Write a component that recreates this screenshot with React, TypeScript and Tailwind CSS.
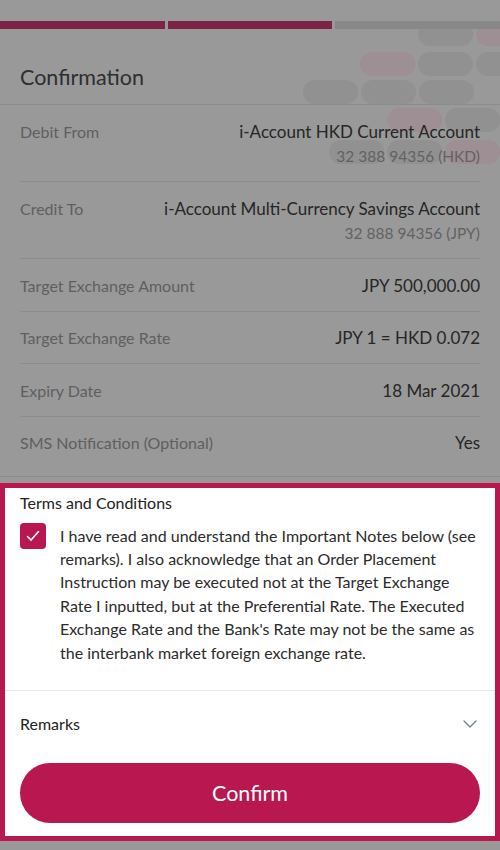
import React from "react";

type Row = { label: string; value: string; sub?: string };

const rows: Row[] = [
  { label: "Debit From", value: "i-Account HKD Current Account", sub: "32 388 94356 (HKD)" },
  { label: "Credit To", value: "i-Account Multi-Currency Savings Account", sub: "32 888 94356 (JPY)" },
  { label: "Target Exchange Amount", value: "JPY 500,000.00" },
  { label: "Target Exchange Rate", value: "JPY 1 = HKD 0.072" },
  { label: "Expiry Date", value: "18 Mar 2021" },
  { label: "SMS Notification (Optional)", value: "Yes" },
];

// decorative pills behind the header (x, y, pink?)
const pills: [number, number, boolean][] = [
  [418, 22, false],
  [476, 22, true],
  [360, 52, true],
  [418, 52, false],
  [476, 52, false],
  [303, 80, false],
  [361, 80, false],
  [419, 80, false],
  [387, 108, true],
  [445, 108, false],
  [329, 140, false],
  [387, 140, false],
  [445, 140, true],
];

function Pills() {
  return (
    <div className="pointer-events-none absolute inset-0 z-0">
      {pills.map(([x, y, pink], i) => (
        <div
          key={i}
          className={`absolute h-[24px] w-[55px] rounded-full ${pink ? "bg-[#9d8f93]" : "bg-[#919191]"}`}
          style={{ left: x, top: y }}
        />
      ))}
    </div>
  );
}

function DetailRow({ row, last }: { row: Row; last: boolean }) {
  const height = row.sub ? "h-[77px]" : last ? "h-[60px]" : "h-[52.5px]";
  return (
    <div className={`flex items-start justify-between gap-4 border-b border-[#8c8c8c] pt-[13.5px] ${height}`}>
      <span className="shrink-0 text-[16px] leading-[25px] text-[#5f5f5f]">{row.label}</span>
      <div className="text-right">
        <div className="text-[17px] leading-[25px] text-[#262626]">{row.value}</div>
        {row.sub && <div className="text-[15.5px] leading-[25px] text-[#626262]">{row.sub}</div>}
      </div>
    </div>
  );
}

export default function App() {
  return (
    <div className="relative h-[850px] w-full overflow-hidden bg-[#999999] font-['Lato','Noto_Sans',sans-serif]">
      <Pills />

      <div className="relative z-10">
        <div className="h-[21px]" />
        <div className="flex h-[8px] gap-[3px]">
          <div className="flex-1 bg-[#7c2445]" />
          <div className="flex-1 bg-[#7c2445]" />
          <div className="flex-1 bg-[#888888]" />
        </div>

        <div className="flex h-[76px] items-end border-b border-[#8c8c8c] px-5 pb-[15px]">
          <h1 className="text-[21.5px] leading-[24px] text-[#2e2e2e]">Confirmation</h1>
        </div>

        <div>
          {rows.map((row, i) => (
            <div key={row.label} className={i === rows.length - 1 ? "" : "px-5"}>
              {i === rows.length - 1 ? (
                <div className="border-b border-[#8c8c8c] px-5">
                  <div className="flex h-[59px] items-start justify-between pt-[13.5px]">
                    <span className="text-[16px] leading-[25px] text-[#5f5f5f]">{row.label}</span>
                    <span className="text-[17px] leading-[25px] text-[#262626]">{row.value}</span>
                  </div>
                </div>
              ) : (
                <DetailRow row={row} last={false} />
              )}
            </div>
          ))}
        </div>

        <div className="h-[6px]" />

        <section className="border-[5px] border-[#b9174f] bg-white">
          <div className="px-[15px] pt-[4px]">
            <h2 className="text-[16px] leading-[22px] text-[#222222]">Terms and Conditions</h2>
            <div className="mt-[9px] flex gap-[14px] pb-[26px]">
              <div className="flex h-[26px] w-[26px] shrink-0 items-center justify-center rounded-[4px] bg-[#b9174f]">
                <svg width="14" height="12" viewBox="0 0 14 12" fill="none">
                  <path d="M1.5 6.5l3.6 3.6L12.5 1.5" stroke="white" strokeWidth="1.6" strokeLinecap="round" strokeLinejoin="round" />
                </svg>
              </div>
              <p className="mt-[1px] text-[16px] leading-[23.4px] text-[#2b2b2b]">
                I have read and understand the Important Notes below (see remarks). I also acknowledge that an Order
                Placement Instruction may be executed not at the Target Exchange Rate I inputted, but at the
                Preferential Rate. The Executed Exchange Rate and the Bank's Rate may not be the same as the interbank
                market foreign exchange rate.
              </p>
            </div>
          </div>

          <div className="border-t border-[#e6e6e6]">
            <div className="flex h-[66px] items-center justify-between px-[15px]">
              <span className="text-[16px] text-[#222222]">Remarks</span>
              <svg width="14" height="8" viewBox="0 0 14 8" fill="none" className="mr-[3px]">
                <path d="M1 1l6 6 6-6" stroke="#6c7fa8" strokeWidth="1.3" strokeLinecap="round" strokeLinejoin="round" />
              </svg>
            </div>
            <div className="px-[15px] pb-[13px] pt-[6px]">
              <button
                type="button"
                className="flex h-[60px] w-full items-center justify-center rounded-full bg-[#b9174f] text-[21.5px] text-white"
              >
                Confirm
              </button>
            </div>
          </div>
        </section>
      </div>
    </div>
  );
}
